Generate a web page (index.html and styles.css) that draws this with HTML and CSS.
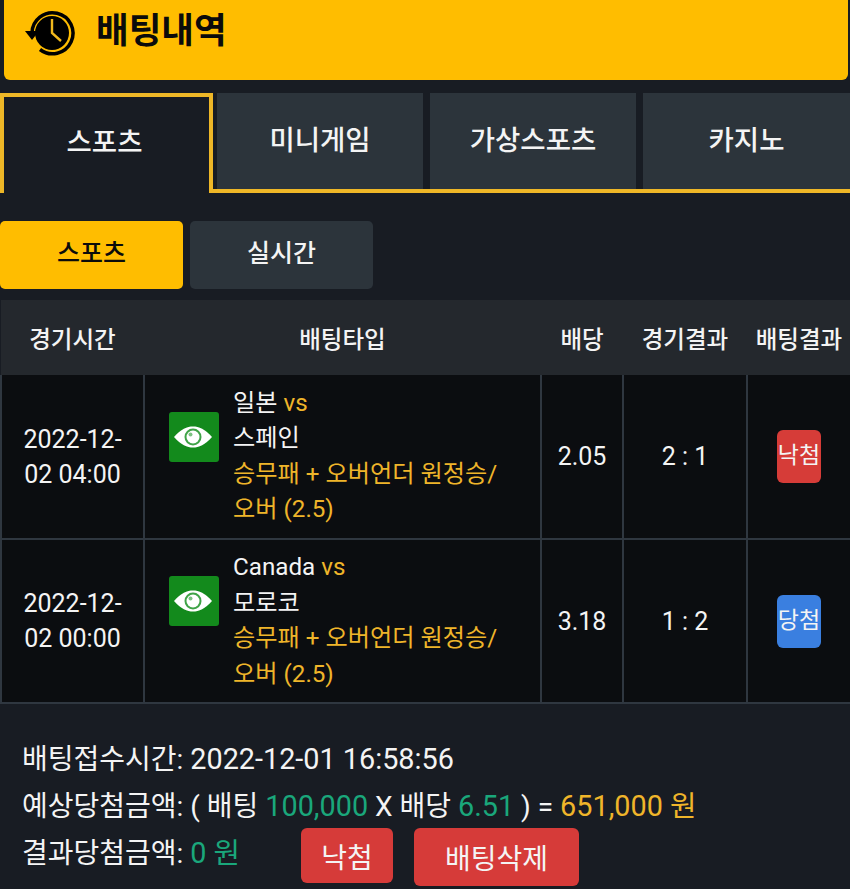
FILE: index.html
```html
<!doctype html>
<html lang="ko">
<head>
  <meta charset="UTF-8">
  <title>배팅내역</title>
  <link rel="stylesheet" href="styles.css">
</head>
<body>
<div id="app">
  <div class="page-title">
    <svg class="title-icon" viewBox="0 0 50 50" width="50" height="50">
      <circle cx="26" cy="25" r="17" fill="#000"/>
      <path d="M6 25A20.5 20.5 0 1 1 14 41.5" fill="none" stroke="#000" stroke-width="3.5"/>
      <path d="M-1 23H13L6 32Z" fill="#000"/>
      <path d="M26 11V25L35 33" fill="none" stroke="#f2b91d" stroke-width="2.4"/>
    </svg>
    <h1>배팅내역</h1>
  </div>

  <div class="tabs">
    <a class="tab active">스포츠</a>
    <a class="tab">미니게임</a>
    <a class="tab">가상스포츠</a>
    <a class="tab">카지노</a>
  </div>

  <div class="sub-tabs">
    <a class="sub-tab active">스포츠</a>
    <a class="sub-tab">실시간</a>
  </div>

  <table class="bet-table">
    <colgroup>
      <col class="col-time">
      <col class="col-type">
      <col class="col-odds">
      <col class="col-score">
      <col class="col-result">
    </colgroup>
    <thead>
      <tr>
        <th>경기시간</th>
        <th>배팅타입</th>
        <th>배당</th>
        <th>경기결과</th>
        <th>배팅결과</th>
      </tr>
    </thead>
    <tbody>
      <tr>
        <td>2022-12-<br>02 04:00</td>
        <td>
          <div class="bet-type">
            <span class="eye-box">
              <svg viewBox="0 0 50 50" width="50" height="50">
                <path d="M5 25C12 17 18 14.5 24 14.5S36 17 43 25C36 33 30 35.5 24 35.5S12 33 5 25Z" fill="#fff"/>
                <circle cx="24" cy="25" r="8.5" fill="#3fa347"/>
                <circle cx="24" cy="25" r="6.5" fill="#fff"/>
                <circle cx="21.5" cy="22.5" r="2" fill="#7cc282"/>
              </svg>
            </span>
            <div class="bet-text">
              일본 <span class="gold">vs</span><br>
              스페인<br>
              <span class="gold">승무패 + 오버언더 원정승/<br>오버 (2.5)</span>
            </div>
          </div>
        </td>
        <td>2.05</td>
        <td>2 : 1</td>
        <td><span class="badge lose">낙첨</span></td>
      </tr>
      <tr>
        <td>2022-12-<br>02 00:00</td>
        <td>
          <div class="bet-type">
            <span class="eye-box">
              <svg viewBox="0 0 50 50" width="50" height="50">
                <path d="M5 25C12 17 18 14.5 24 14.5S36 17 43 25C36 33 30 35.5 24 35.5S12 33 5 25Z" fill="#fff"/>
                <circle cx="24" cy="25" r="8.5" fill="#3fa347"/>
                <circle cx="24" cy="25" r="6.5" fill="#fff"/>
                <circle cx="21.5" cy="22.5" r="2" fill="#7cc282"/>
              </svg>
            </span>
            <div class="bet-text">
              Canada <span class="gold">vs</span><br>
              모로코<br>
              <span class="gold">승무패 + 오버언더 원정승/<br>오버 (2.5)</span>
            </div>
          </div>
        </td>
        <td>3.18</td>
        <td>1 : 2</td>
        <td><span class="badge win">당첨</span></td>
      </tr>
    </tbody>
  </table>

  <div class="summary">
    <p>배팅접수시간: <span class="num">2022-12-01 16:58:56</span></p>
    <p>예상당첨금액: ( 배팅 <span class="num green">100,000</span> X 배당 <span class="num green">6.51</span> ) = <span class="num gold">651,000 원</span></p>
    <div class="summary-last">
      <p class="summary-result">결과당첨금액: <span class="num green">0 원</span></p>
      <button class="btn btn-lose">낙첨</button>
      <button class="btn btn-delete">배팅삭제</button>
    </div>
  </div>
</div>
</body>
</html>
```

FILE: styles.css
```css
* {
  margin: 0;
  padding: 0;
  box-sizing: border-box;
}
html, body {
  height: 100%;
  width: 100%;
}
body {
  background: #181c23;
  color: #f4f4f4;
  font-family: Roboto, "Noto Sans CJK KR", sans-serif;
  overflow: hidden;
}
#app {
  height: 889px;
}

.page-title {
  height: 80px;
  margin: 0 2px 0 4px;
  padding: 8px 0 0 22px;
  background: #ffbd00;
  border-radius: 0 0 6px 6px;
  display: flex;
  align-items: flex-start;
}
.title-icon {
  flex: none;
  overflow: visible;
}
.page-title h1 {
  margin-left: 20px;
  color: #0b0b0b;
  font-size: 35.5px;
  font-weight: 700;
  line-height: 47px;
}

.tabs {
  margin-top: 13px;
  height: 100px;
  display: flex;
  border-bottom: 4px solid #eeb727;
}
.tab {
  width: 206px;
  margin-left: 7px;
  background: #2c343b;
  font-size: 27.5px;
  font-weight: 500;
  line-height: 96px;
  text-align: center;
}
.tab:last-child {
  flex: 1;
}
.tab.active {
  width: 213px;
  height: 100px;
  margin-left: 0;
  margin-right: -3px;
  padding-right: 4px;
  background: #181c23;
  border: 4px solid #eeb727;
  border-bottom: 0;
  line-height: 92px;
}

.sub-tabs {
  margin-top: 28px;
  display: flex;
  gap: 7px;
}
.sub-tab {
  width: 183px;
  height: 68px;
  background: #2c343b;
  border-radius: 5px;
  font-size: 25px;
  font-weight: 500;
  line-height: 66px;
  text-align: center;
}
.sub-tab.active {
  background: #ffbd00;
  color: #0b0b0b;
}

.bet-table {
  margin-top: 11px;
  width: 850px;
  table-layout: fixed;
  border-collapse: collapse;
}
.col-time { width: 143px; }
.col-type { width: 397px; }
.col-odds { width: 82px; }
.col-score { width: 124px; }
.col-result { width: 104px; }

.bet-table th {
  height: 75px;
  background: #24282d;
  font-size: 23.5px;
  font-weight: 500;
  text-align: center;
}
.bet-table td {
  height: 164px;
  background: #0b0d10;
  border: 2px solid #2f3740;
  font-size: 25px;
  line-height: 35px;
  text-align: center;
}
.bet-table tbody tr:first-child td {
  border-top: 0;
}

.bet-type {
  display: flex;
  align-items: flex-start;
  padding-left: 24px;
  text-align: left;
}
.eye-box {
  flex: none;
  width: 50px;
  height: 50px;
  margin: 26px 14px 0 0;
  background: #138a1c;
  border-radius: 3px;
}
.eye-box svg {
  display: block;
}
.bet-text {
  font-size: 24.2px;
  line-height: 35.5px;
}
.gold {
  color: #efb52a;
}
.green {
  color: #1aa77b;
}

.badge {
  display: inline-block;
  width: 44px;
  height: 53px;
  border-radius: 6px;
  font-size: 23px;
  line-height: 51px;
  vertical-align: middle;
  white-space: nowrap;
}
.badge.lose {
  background: #d63c38;
}
.badge.win {
  background: #3a7fe0;
}

.summary {
  padding: 32px 0 0 22px;
  font-size: 28px;
  line-height: 47px;
}
.num {
  font-size: 28.8px;
}
.summary-last {
  display: flex;
  align-items: flex-start;
}
.summary-result {
  width: 279px;
}
.btn {
  margin-top: -2px;
  border: 0;
  background: #d63b39;
  color: #f4f4f4;
  border-radius: 6px;
  font-family: inherit;
  font-size: 28px;
}
.btn-lose {
  width: 92px;
  height: 55px;
}
.btn-delete {
  width: 165px;
  height: 58px;
  margin-left: 21px;
}
```
